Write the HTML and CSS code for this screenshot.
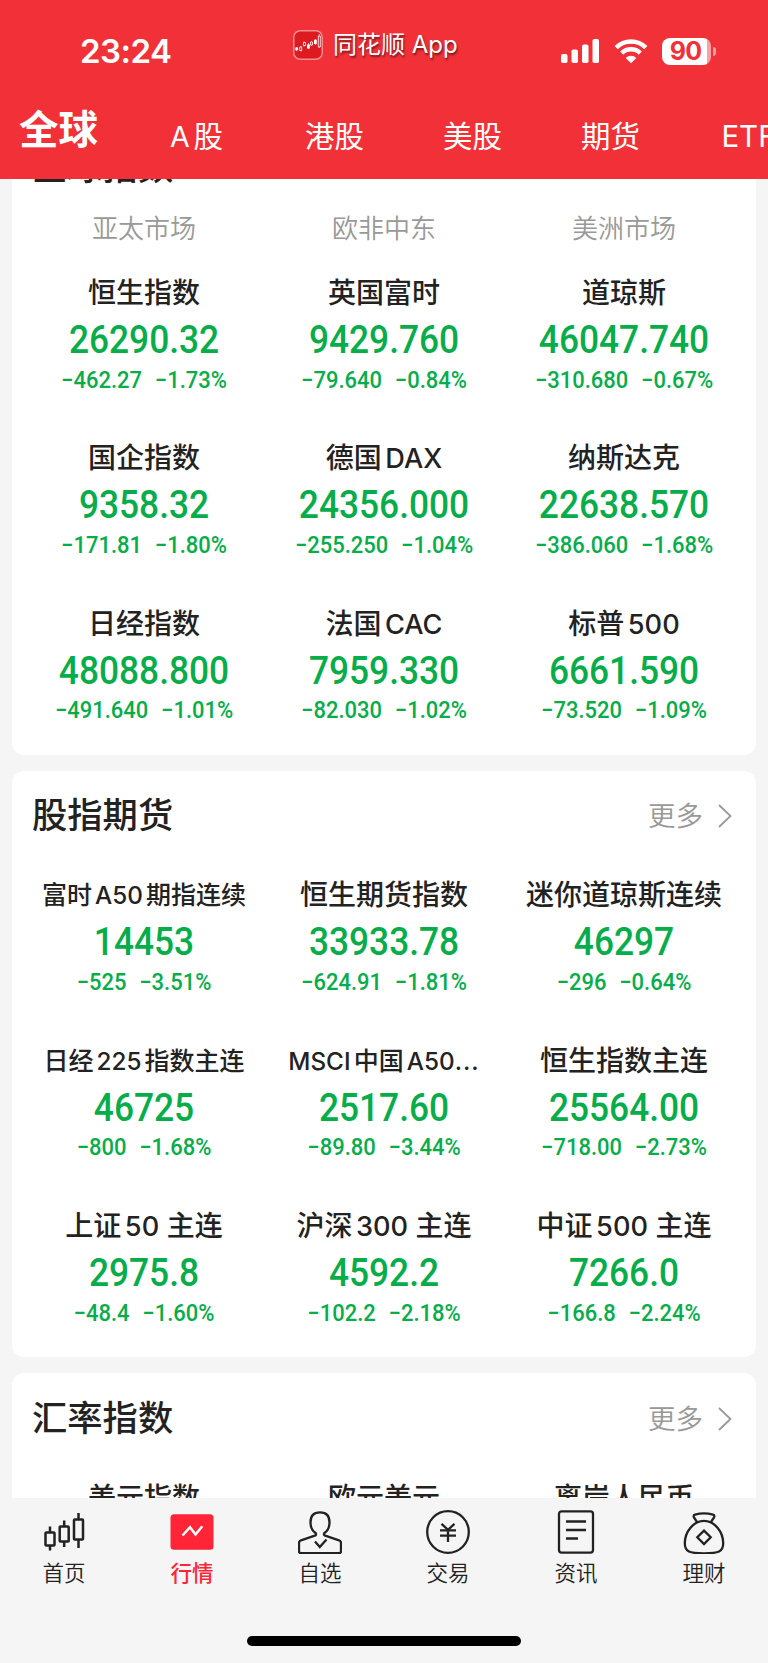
FILE: index.html
```
<!DOCTYPE html>
<html lang="zh-CN">
<head>
  <meta charset="UTF-8">
  <meta name="viewport" content="width=device-width, initial-scale=1.0">
  <title>全球行情</title>
  <link rel="stylesheet" href="styles.css">
</head>
<body>
  <div class="app">
    <header class="header">
      <div class="status-bar">
        <div class="time">23:24</div>
        <div class="app-badge">
          <svg class="app-logo" viewBox="0 0 30 30" fill="none">
            <rect x="0.75" y="0.75" width="28.5" height="28.5" rx="6.5" fill="#dc1a20" stroke="#f58d8f" stroke-width="1.5"/>
            <path d="M3.5 17v4M8 16v5.500M11 11.500v5M15.500 13v6M18.500 11v5M22.500 9v6M26.300 4v14" stroke="#fff" stroke-width="0.700"/>
            <path d="M2.300 17.500h2.800v2.800H2.300zM14 14.500h2.800v4H14zM21 9.800h2.800v4.200H21z" fill="#fff"/>
            <path d="M6.700 17h2v3.500h-2zM10.500 12.500h2v3h-2zM17.500 12h2v3h-2zM25.300 6h2v11h-2z" fill="#dc1a20" stroke="#fff" stroke-width="0.800"/>
          </svg>
          <span>同花顺 App</span>
        </div>
        <div class="status-icons">
          <svg width="39" height="24" viewBox="0 0 39 24" fill="#fff">
            <rect x="0" y="15" width="6.500" height="9" rx="1.800"/>
            <rect x="10.500" y="10.500" width="6.500" height="13.500" rx="1.800"/>
            <rect x="21" y="5.500" width="6.500" height="18.500" rx="1.800"/>
            <rect x="31.500" y="0" width="6.500" height="24" rx="1.800"/>
          </svg>
          <svg class="wifi" width="34" height="25" viewBox="0 0 34 25" fill="none">
            <path d="M2.200 8.600a21 21 0 0 1 29.600 0" stroke="#fff" stroke-width="4.600"/>
            <path d="M7.700 14.100a13.200 13.200 0 0 1 18.600 0" stroke="#fff" stroke-width="4.400"/>
            <path d="M17 24.300l-5.300-5.300a7.500 7.500 0 0 1 10.600 0z" fill="#fff"/>
          </svg>
          <div class="battery"><span>90</span></div>
          <div class="battery-tip"></div>
        </div>
      </div>
      <nav class="tabs">
        <div class="tab tab-active">全球</div>
        <div class="tab"><span class="latin latin-start">A</span>股</div>
        <div class="tab">港股</div>
        <div class="tab">美股</div>
        <div class="tab">期货</div>
        <div class="tab">ETF</div>
      </nav>
    </header>

    <main class="content">
      <section class="card">
        <div class="card-header"><h2>全球指数</h2></div>
        <div class="regions">
          <span>亚太市场</span>
          <span>欧非中东</span>
          <span>美洲市场</span>
        </div>
        <div class="grid">
          <div class="cell">
            <div class="name">恒生指数</div>
            <div class="price">26290.32</div>
            <div class="change"><span>−462.27</span><span>−1.73%</span></div>
          </div>
          <div class="cell">
            <div class="name">英国富时</div>
            <div class="price">9429.760</div>
            <div class="change"><span>−79.640</span><span>−0.84%</span></div>
          </div>
          <div class="cell">
            <div class="name">道琼斯</div>
            <div class="price">46047.740</div>
            <div class="change"><span>−310.680</span><span>−0.67%</span></div>
          </div>
          <div class="cell">
            <div class="name">国企指数</div>
            <div class="price">9358.32</div>
            <div class="change"><span>−171.81</span><span>−1.80%</span></div>
          </div>
          <div class="cell">
            <div class="name">德国<span class="latin latin-end">DAX</span></div>
            <div class="price">24356.000</div>
            <div class="change"><span>−255.250</span><span>−1.04%</span></div>
          </div>
          <div class="cell">
            <div class="name">纳斯达克</div>
            <div class="price">22638.570</div>
            <div class="change"><span>−386.060</span><span>−1.68%</span></div>
          </div>
          <div class="cell">
            <div class="name">日经指数</div>
            <div class="price">48088.800</div>
            <div class="change"><span>−491.640</span><span>−1.01%</span></div>
          </div>
          <div class="cell">
            <div class="name">法国<span class="latin latin-end">CAC</span></div>
            <div class="price">7959.330</div>
            <div class="change"><span>−82.030</span><span>−1.02%</span></div>
          </div>
          <div class="cell">
            <div class="name">标普<span class="latin latin-end">500</span></div>
            <div class="price">6661.590</div>
            <div class="change"><span>−73.520</span><span>−1.09%</span></div>
          </div>
        </div>
      </section>

      <section class="card">
        <div class="card-header">
          <h2>股指期货</h2>
          <div class="more">
            <span>更多</span>
            <svg width="14" height="24" viewBox="0 0 14 24" fill="none" stroke="#999" stroke-width="1.800"><path d="M1 1l11.500 11L1 23"/></svg>
          </div>
        </div>
        <div class="grid">
          <div class="cell">
            <div class="name name-small">富时<span class="latin">A50</span>期指连续</div>
            <div class="price">14453</div>
            <div class="change"><span>−525</span><span>−3.51%</span></div>
          </div>
          <div class="cell">
            <div class="name">恒生期货指数</div>
            <div class="price">33933.78</div>
            <div class="change"><span>−624.91</span><span>−1.81%</span></div>
          </div>
          <div class="cell">
            <div class="name">迷你道琼斯连续</div>
            <div class="price">46297</div>
            <div class="change"><span>−296</span><span>−0.64%</span></div>
          </div>
          <div class="cell">
            <div class="name name-small">日经<span class="latin">225</span>指数主连</div>
            <div class="price">46725</div>
            <div class="change"><span>−800</span><span>−1.68%</span></div>
          </div>
          <div class="cell">
            <div class="name name-small"><span class="latin latin-start">MSCI</span>中国<span class="latin latin-end">A50<span class="dots">...</span></span></div>
            <div class="price">2517.60</div>
            <div class="change"><span>−89.80</span><span>−3.44%</span></div>
          </div>
          <div class="cell">
            <div class="name">恒生指数主连</div>
            <div class="price">25564.00</div>
            <div class="change"><span>−718.00</span><span>−2.73%</span></div>
          </div>
          <div class="cell">
            <div class="name">上证<span class="latin latin-end">50</span> 主连</div>
            <div class="price">2975.8</div>
            <div class="change"><span>−48.4</span><span>−1.60%</span></div>
          </div>
          <div class="cell">
            <div class="name">沪深<span class="latin latin-end">300</span> 主连</div>
            <div class="price">4592.2</div>
            <div class="change"><span>−102.2</span><span>−2.18%</span></div>
          </div>
          <div class="cell">
            <div class="name">中证<span class="latin latin-end">500</span> 主连</div>
            <div class="price">7266.0</div>
            <div class="change"><span>−166.8</span><span>−2.24%</span></div>
          </div>
        </div>
      </section>

      <section class="card">
        <div class="card-header">
          <h2>汇率指数</h2>
          <div class="more">
            <span>更多</span>
            <svg width="14" height="24" viewBox="0 0 14 24" fill="none" stroke="#999" stroke-width="1.800"><path d="M1 1l11.500 11L1 23"/></svg>
          </div>
        </div>
        <div class="grid">
          <div class="cell"><div class="name">美元指数</div></div>
          <div class="cell"><div class="name">欧元美元</div></div>
          <div class="cell"><div class="name">离岸人民币</div></div>
        </div>
      </section>
    </main>

    <footer class="bottom">
      <nav class="bottom-nav">
        <div class="nav-item">
          <svg viewBox="0 0 44 44" fill="none" stroke="#222" stroke-width="2.500" stroke-linejoin="round">
            <rect x="3.500" y="22.500" width="9" height="13" rx="0.800"/>
            <rect x="17.700" y="16.500" width="9" height="15" rx="0.800"/>
            <rect x="32" y="9.500" width="9" height="20" rx="0.800"/>
            <path d="M8 16.500v6M8 35.500v5M22.200 10.500v6M22.200 31.500v5.500M36.500 3v6.500M36.500 29.500v8.500"/>
          </svg>
          <span>首页</span>
        </div>
        <div class="nav-item nav-active">
          <svg viewBox="0 0 44 44" fill="none">
            <rect x="0.500" y="4.300" width="43" height="35.500" rx="3.500" fill="#ff2436"/>
            <path d="M12.500 25.500l7.500-8.300 5.500 7.300 6.800-8.200" stroke="#fff" stroke-width="2.500"/>
          </svg>
          <span>行情</span>
        </div>
        <div class="nav-item">
          <svg viewBox="0 0 44 44" fill="none" stroke="#222" stroke-width="2.300" stroke-linejoin="round">
            <path d="M17.800 23.300c-3-2-5.300-5.500-5.300-11C12.500 6 16 2.400 22 2.400s9.500 3.600 9.500 9.900c0 5.500-2.300 9-5.300 11-.6 1.400 0 2 1 2.400l13.800 4.600c1.300.5 2 1.300 2 2.600v8.200c0 1.300-.6 2-1.800 2H2.800c-1.200 0-1.800-.7-1.800-2v-8.200c0-1.300.7-2.100 2-2.600l13.800-4.600c1-.4 1.600-1 1-2.400z"/>
            <path d="M17 31.500l4.800 5.500 6.700-7.500" stroke-linejoin="miter"/>
          </svg>
          <span>自选</span>
        </div>
        <div class="nav-item">
          <svg viewBox="0 0 44 44" fill="none" stroke="#222" stroke-width="2.300">
            <circle cx="22" cy="22" r="20.800"/>
            <path d="M15.500 13.800l6.500 6 6.500-6M14 20.300h16M14 25.700h16M22 20v12"/>
          </svg>
          <span>交易</span>
        </div>
        <div class="nav-item">
          <svg viewBox="0 0 44 44" fill="none" stroke="#222" stroke-width="2.300">
            <rect x="5" y="1.400" width="34" height="41.200" rx="2.500"/>
            <path d="M12 11.500h20M12 20h20M12 28.500h12"/>
          </svg>
          <span>资讯</span>
        </div>
        <div class="nav-item">
          <svg viewBox="0 0 44 44" fill="none" stroke="#222" stroke-width="2.300" stroke-linejoin="round">
            <path d="M15.300 12.300l-3.300-4.800c-.8-1.300-.5-2.400 1-2.900 5.500-1.500 12.500-1.500 18 0 1.500.5 1.800 1.600 1 2.900l-3.300 4.800"/>
            <path d="M22 10.800c-10.500 0-19.200 11-19.200 22.500 0 8.500 4.500 10 19.200 10s19.200-1.500 19.200-10c0-11.500-8.700-22.500-19.200-22.500z"/>
            <path d="M22 20.600l6.700 6.700-6.700 6.700-6.700-6.700z" stroke-linejoin="miter"/>
          </svg>
          <span>理财</span>
        </div>
      </nav>
      <div class="home-indicator"></div>
    </footer>
  </div>
</body>
</html>
```
FILE: styles.css
```
* {
  box-sizing: border-box;
}

body {
  margin: 0;
  background-color: #f5f5f5;
  color: #222222;
  font-family: Inter, "Noto Sans CJK SC", sans-serif;
}

.app {
  display: flex;
  flex-direction: column;
  width: 768px;
  height: 1663px;
  overflow: hidden;
}

/* Header */
.header {
  flex: none;
  height: 179px;
  background-color: #f23037;
  color: #ffffff;
}

.status-bar {
  display: grid;
  grid-template-columns: 293px 1fr 207px;
  height: 96px;
}

.time {
  padding: 31px 0 0 80px;
  font-size: 33px;
  font-weight: 600;
  letter-spacing: -0.5px;
  line-height: 40px;
}

.app-badge {
  display: flex;
  align-items: center;
  gap: 10px;
  height: 89px;
  font-size: 24px;
  line-height: 30px;
  white-space: nowrap;
  text-shadow: 1px 2px 2px rgba(0, 0, 0, 0.5);
}

.app-logo {
  width: 30px;
  height: 30px;
}

.status-icons {
  display: flex;
  align-items: center;
  height: 102px;
}

.wifi {
  margin-left: 14px;
}

.battery {
  display: flex;
  justify-content: center;
  width: 49px;
  height: 27px;
  margin-left: 14px;
  padding-right: 2px;
  border-radius: 8px;
  background: linear-gradient(to right, #ffffff 45px, #f9a0a4 45px);
  color: #f23037;
  font-size: 25px;
  font-weight: 700;
  letter-spacing: -0.8px;
  line-height: 27px;
}

.battery-tip {
  width: 3px;
  height: 9px;
  margin-left: 2px;
  border-radius: 0 4px 4px 0;
  background-color: #f9a0a4;
}

.tabs {
  display: flex;
  height: 83px;
  overflow: hidden;
}

.tab {
  flex: none;
  width: 138px;
  padding-top: 20px;
  font-size: 29.5px;
  line-height: 40px;
  text-align: center;
}

.tab-active {
  width: 127.5px;
  padding: 14px 0 0 19px;
  font-size: 39.5px;
  font-weight: 600;
  text-align: left;
}

/* Latin letters and digits inside Chinese names */
.latin {
  margin: 0 0.13em;
  font-size: 0.97em;
}

.latin-start {
  margin-left: 0;
}

.latin-end {
  margin-right: 0;
}

.dots {
  letter-spacing: 1px;
}

/* Market cards */
.content {
  flex: 1;
  min-height: 0;
  padding: 0 12px;
  overflow: hidden;
}

.card {
  margin-bottom: 16px;
  padding: 0 12px;
  border-radius: 12px;
  background-color: #ffffff;
}

/* the list is scrolled down a little */
.card:first-child {
  margin-top: -56.5px;
}

.card-header {
  display: flex;
  align-items: center;
  justify-content: space-between;
  height: 90.5px;
  padding: 0 12px 0 8px;
}

h2 {
  margin: 0;
  font-size: 35.3px;
  font-weight: 500;
  line-height: 50px;
}

.more {
  display: flex;
  align-items: center;
  gap: 15px;
  color: #999999;
  font-size: 27.5px;
  font-weight: 350;
  line-height: 40px;
}

.regions {
  display: grid;
  grid-template-columns: repeat(3, 1fr);
  height: 46px;
  color: #999999;
  font-size: 26px;
  font-weight: 350;
  line-height: 32px;
  text-align: center;
}

.grid {
  display: grid;
  grid-template-columns: repeat(3, 1fr);
}

.cell {
  height: 165.33px;
  padding-top: 14px;
  text-align: center;
}

.name {
  height: 40px;
  font-size: 28px;
  font-weight: 500;
  line-height: 40px;
  white-space: nowrap;
}

.name .latin {
  font-weight: 450;
}

.name-small {
  font-size: 25px;
}

.price {
  color: #07ad4b;
  font-family: Roboto, sans-serif;
  font-size: 39px;
  font-weight: 500;
  line-height: 55px;
  transform: scaleX(0.905);
}

.change {
  display: flex;
  justify-content: center;
  gap: 14px;
  margin-top: -2.5px;
  color: #07ad4b;
  font-family: Roboto, sans-serif;
  font-size: 24px;
  font-weight: 500;
  line-height: 28px;
  transform: scaleX(0.915);
}

/* Bottom navigation */
.bottom {
  flex: none;
  height: 165px;
  background-color: #f5f5f5;
}

.bottom-nav {
  display: grid;
  grid-template-columns: repeat(6, 1fr);
  height: 138px;
}

.nav-item {
  display: flex;
  flex-direction: column;
  align-items: center;
  padding-top: 12px;
  font-size: 21.5px;
  font-weight: 350;
  line-height: 32px;
}

.nav-item svg {
  width: 44px;
  height: 44px;
  margin-bottom: 3px;
}

.nav-active {
  color: #ff2436;
  font-weight: 500;
}

.home-indicator {
  width: 274px;
  height: 10px;
  margin: 0 auto;
  border-radius: 5px;
  background-color: #000000;
}
```
